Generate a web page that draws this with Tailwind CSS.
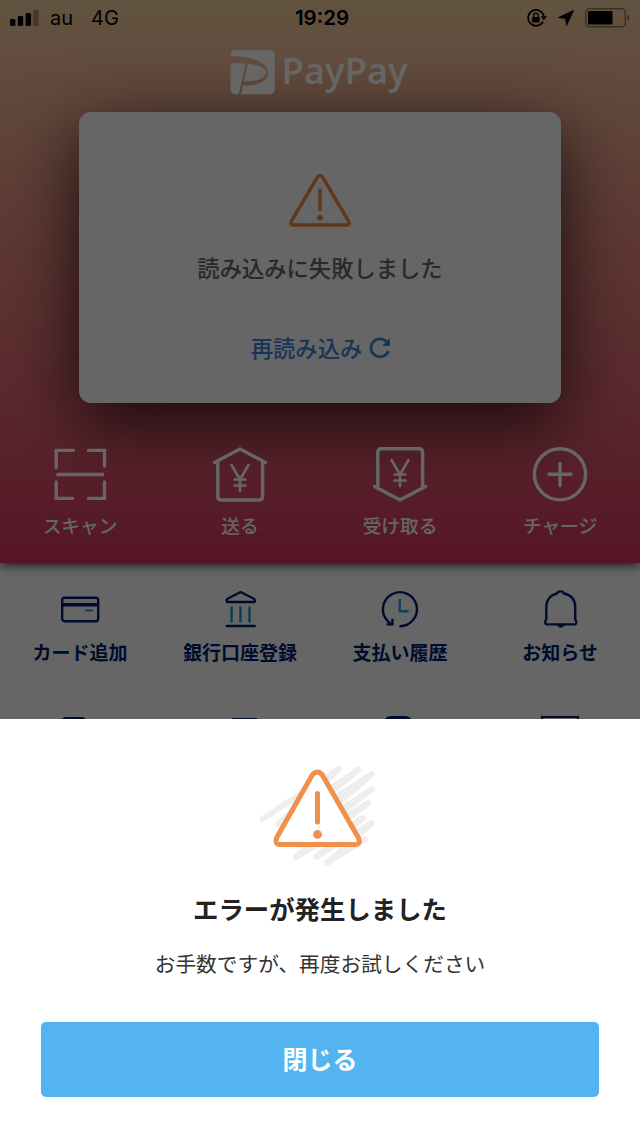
<!DOCTYPE html>
<html lang="ja">
<head>
  <meta charset="UTF-8" />
  <meta name="viewport" content="width=device-width, initial-scale=1" />
  <title>PayPay</title>
  <script src="https://cdn.jsdelivr.net/npm/@tailwindcss/browser@4"></script>
</head>
<body class="bg-white font-['Noto_Sans_CJK_JP',sans-serif]">
  <div class="relative w-[640px] h-[1138px] overflow-hidden">

    <!-- HOME -->
    <section class="relative h-[563px] bg-linear-to-b from-[#f6d0a2] from-0% via-[#eb8c82] via-42% to-[#d43460] to-100% shadow-[0_2px_10px_rgba(0,0,0,0.8)]">
      <!-- Status bar -->
      <div class="grid grid-cols-3 items-center h-[36px] px-[10px] text-black font-['Inter',sans-serif]">
        <div class="flex items-center text-[20px]">
          <svg class="w-[29px] h-[18px]" viewBox="0 0 29 18">
            <rect x="0" y="10" width="5.4" height="7" rx="1.4" />
            <rect x="7.8" y="7" width="5.4" height="10" rx="1.4" />
            <rect x="15.6" y="4" width="5.4" height="13" rx="1.4" />
            <rect x="23.2" y="1" width="5.4" height="16" rx="1.4" opacity="0.3" />
          </svg>
          <span class="ml-[11px]">au</span>
          <span class="ml-[18px]">4G</span>
        </div>
        <div class="pl-[4px] text-center text-[20.5px] font-semibold">19:29</div>
        <div class="flex items-center justify-end">
          <svg class="w-[20px] h-[18px]" viewBox="0 0 20 18">
            <path d="M16 12.6A7.9 7.9 0 1 1 16.8 7.4" fill="none" stroke="#000" stroke-width="1.7" />
            <path d="M13.6 7.2h6.4l-3.2 4z" />
            <rect x="5.2" y="8" width="7.4" height="5.4" rx="0.6" />
            <path d="M6.7 8.2V6.4a2.2 2.2 0 0 1 4.4 0v1.8" fill="none" stroke="#000" stroke-width="1.3" />
          </svg>
          <svg class="ml-[11px] w-[16px] h-[16px]" viewBox="0 0 16 16">
            <path d="M15.6 0.4 0.4 7.6 7.6 8.4 8.6 15.6z" stroke="#000" stroke-width="0.8" stroke-linejoin="round" />
          </svg>
          <svg class="ml-[11px] w-[45px] h-[20px]" viewBox="0 0 45 20">
            <rect x="0.8" y="0.8" width="39.5" height="18" rx="3.5" fill="none" stroke="#000" stroke-opacity="0.4" stroke-width="1.6" />
            <rect x="3" y="3" width="24.5" height="13.6" rx="0.8" />
            <path d="M42.2 6.5c3 1.4 3 5.2 0 6.6z" fill-opacity="0.4" />
          </svg>
        </div>
      </div>

      <!-- Logo -->
      <div class="flex justify-center pt-[6px]">
        <svg class="w-[180px] h-[60px] overflow-visible" viewBox="0 -8 180 60">
          <mask id="logo">
            <rect width="45" height="45" rx="5" fill="#fff" />
            <path d="M-1 6.200C22 5.500 38 12.500 38 22.500C38 31.500 27 35.800 12.500 35.500L13.500 31.500C26 31.500 36 29 36 22C36 16 22 12.500 -1 13.500Z" fill="#000" />
            <path d="M16.800 13 9.500 46" stroke="#000" stroke-width="2.200" />
          </mask>
          <rect x="0.500" y="0" width="44.300" height="44.300" rx="5" fill="#fff" mask="url(#logo)" />
          <text x="51.500" y="33.800" textLength="126" lengthAdjust="spacingAndGlyphs" fill="#fff" font-family="Open Sans, sans-serif" font-weight="600" font-size="35.500">PayPay</text>
        </svg>
      </div>

      <!-- Load error card -->
      <div class="mx-auto mt-[10px] flex flex-col items-center w-[482px] h-[291px] rounded-xl bg-white shadow-[0_20px_70px_rgba(0,0,0,0.75)]">
        <svg class="mt-[61px] w-[64px] h-[56px]" viewBox="0 0 64 56" fill="none" stroke="#f5883c" stroke-width="3.400" stroke-linecap="round" stroke-linejoin="round">
          <path d="M29.200 4.300Q32 0.700 34.800 4.300L60.500 48.200Q62.500 52 58.500 52H5.500Q1.500 52 3.500 48.200Z" />
          <path d="M32 17V36.500" />
          <circle cx="32" cy="44.800" r="3" fill="#f5883c" stroke="none" />
        </svg>
        <p class="mt-[21px] text-[22.300px] leading-[34px] font-medium text-[#666]">読み込みに失敗しました</p>
        <div class="mt-[46px] pl-[2px] flex items-center gap-[7px] text-[22.300px] leading-[34px] font-medium text-[#4383dc]">
          <span>再読み込み</span>
          <svg class="mt-[1px] w-[22px] h-[22px]" viewBox="0 0 22 22" fill="none" stroke="#4383dc" stroke-width="2.800">
            <path d="M19.400 14A9 9 0 1 1 17.800 4.900" />
            <path d="M20.800 1V9H13z" fill="#4383dc" stroke="none" />
          </svg>
        </div>
      </div>

      <!-- Main actions -->
      <div class="mt-[43px] grid grid-cols-4 text-center text-white text-[18.700px] leading-[28px] font-medium">
        <div class="flex flex-col items-center">
          <svg class="w-[56px] h-[56px]" viewBox="0 0 56 56" fill="none" stroke="#fff" stroke-width="3.400" stroke-linecap="round">
            <path d="M21.500 4.400H4.200V21.500M36.500 4.400H52.500V20M52.500 36V52.400H36.500M4.200 36V52.400H20.500" />
            <path d="M4.500 28.500H52" stroke-linecap="butt" />
          </svg>
          <span class="mt-[9px]">スキャン</span>
        </div>
        <div class="flex flex-col items-center">
          <svg class="w-[56px] h-[56px]" viewBox="0 0 56 56" fill="none" stroke="#fff" stroke-width="3.400" stroke-linecap="round" stroke-linejoin="round">
            <path d="M2.500 16.500 28 3 53.500 16.500" />
            <path d="M5.800 16.500V50.500Q5.800 54 9.500 54H47Q50.600 54 50.600 50.500V16.500" />
            <path d="M19.500 19 28 33.500 36.500 19M28 33.500V45M22.500 33.500H33.500M22.500 39.500H33.500" stroke-width="2.600" />
          </svg>
          <span class="mt-[9px]">送る</span>
        </div>
        <div class="flex flex-col items-center">
          <svg class="w-[56px] h-[56px]" viewBox="0 0 56 56" fill="none" stroke="#fff" stroke-width="3.400" stroke-linecap="round" stroke-linejoin="round">
            <path d="M2.500 40.500 28 54 53.500 40.500" />
            <path d="M5.800 40V6.500Q5.800 2.800 9.500 2.800H47Q50.600 2.800 50.600 6.500V40" />
            <path d="M19.500 14 28 28.500 36.500 14M28 28.500V40M22.500 28.500H33.500M22.500 34.500H33.500" stroke-width="2.600" />
          </svg>
          <span class="mt-[9px]">受け取る</span>
        </div>
        <div class="flex flex-col items-center">
          <svg class="w-[56px] h-[56px]" viewBox="0 0 56 56" fill="none" stroke="#fff" stroke-width="3.400" stroke-linecap="round">
            <circle cx="28" cy="28.300" r="25.600" />
            <path d="M28 17.500V39.500M17 28.300H39" />
          </svg>
          <span class="mt-[9px]">チャージ</span>
        </div>
      </div>
    </section>

    <!-- Menu -->
    <section class="h-[200px] overflow-hidden pt-[26px] text-center text-[#001f70] text-[19px] leading-[28px] font-bold">
      <div class="grid grid-cols-4">
        <div class="flex flex-col items-center">
          <svg class="w-[40px] h-[40px]" viewBox="0 0 40 40" fill="none" stroke="#001f70" stroke-width="2.400" stroke-linecap="round">
            <rect x="2.200" y="8.700" width="36" height="23.500" rx="2.500" />
            <path d="M2.200 15.800H38.200" stroke-width="3.400" stroke-linecap="butt" />
            <path d="M25.800 21.500H32" stroke="#1898d8" stroke-width="2" />
          </svg>
          <span class="mt-[9px]">カード追加</span>
        </div>
        <div class="flex flex-col items-center">
          <svg class="w-[40px] h-[40px]" viewBox="0 0 40 40" fill="none" stroke="#001f70" stroke-width="2.400" stroke-linecap="round" stroke-linejoin="round">
            <path d="M20.600 3 34 9.700Q35.300 10.600 34.600 13H7.200Q6 10.600 7.600 9.700Z" />
            <path d="M6.800 37H34.700" />
            <path d="M11.600 17.500V33.500M20.500 17.500V33.500M29.500 17.500V33.500" stroke="#1898d8" stroke-linecap="butt" />
          </svg>
          <span class="mt-[9px]">銀行口座登録</span>
        </div>
        <div class="flex flex-col items-center">
          <svg class="w-[40px] h-[40px]" viewBox="0 0 40 40" fill="none" stroke="#001f70" stroke-width="2.400">
            <path d="M19.500 37.200A17 17 0 1 0 8 32.300L12 35.800" />
            <path d="M6.500 35.400H12.500V29.800" />
            <path d="M19.700 10V22.300H28.600" stroke="#27a4e0" />
          </svg>
          <span class="mt-[9px]">支払い履歴</span>
        </div>
        <div class="flex flex-col items-center">
          <svg class="w-[40px] h-[40px]" viewBox="0 0 40 40" fill="none" stroke="#001f70" stroke-width="2.400" stroke-linejoin="round">
            <path d="M17 4.500C18 1.600 23 1.600 24 4.500C31 6 35.200 11 35.200 18V29.500C35.200 31.500 36.800 32 36.200 34.200Q35.800 35.400 34.500 35.400H7Q5.600 35.400 5.200 34.200C4.800 32 6.300 31.500 6.300 29.500V18C6.300 11 10.500 6 17 4.500Z" />
            <path d="M17 36.200H24.500Q22.500 38.300 20.700 38.300T17 36.200Z" fill="#001f70" stroke-width="1" />
          </svg>
          <span class="mt-[9px]">お知らせ</span>
        </div>
      </div>
      <div class="mt-[51px] grid grid-cols-4 justify-items-center">
        <div class="w-[24px] h-[38px] -ml-[12px] rounded-sm border-3 border-[#001f70]"></div>
        <div class="w-[25px] h-[38px] ml-[8px] mt-[1px] border-3 border-[#001f70]"></div>
        <div class="w-[30px] h-[38px] -ml-[5px] -mt-[1px] rounded-lg border-3 border-[#001f70]"></div>
        <div class="w-[38px] h-[38px] -mt-[1px] border-2 border-[#001f70]"></div>
      </div>
    </section>

    <!-- Backdrop -->
    <div class="absolute inset-0 bg-black/60"></div>

    <!-- Error sheet -->
    <div class="absolute inset-x-0 bottom-0 h-[419px] bg-white flex flex-col items-center px-[41px]">
      <svg class="mt-[41px] w-[120px] h-[110px]" viewBox="0 0 120 110" fill="none" stroke-linecap="round" stroke-linejoin="round">
        <path d="M2.500 59 79 9 18 64 98 10 30 67 112 14 35 80 112 29 40 85 108 43 36 97 103 58 56 97 112 63 67 103 105 79" stroke="#eee" stroke-width="6" />
        <path d="M52.500 14.500Q57.500 9.500 62 14.500L98.500 78Q101 84.500 95 84.500H20Q14.500 84.500 16.500 78Z" fill="#fff" stroke="#f0904b" stroke-width="5" />
        <path d="M57.500 33.500V62" stroke="#f0904b" stroke-width="5" />
        <circle cx="57.500" cy="74.500" r="4.400" fill="#f0904b" />
      </svg>
      <h1 class="mt-[19px] text-[25.400px] leading-[38px] font-bold text-[#222]">エラーが発生しました</h1>
      <p class="mt-[20px] text-[20.700px] leading-[32px] text-[#333]">お手数ですが、再度お試しください</p>
      <button class="mt-[43px] w-full h-[75px] pb-[2px] rounded-[5px] bg-[#54b4ef] text-white text-[25px] font-bold">閉じる</button>
    </div>
  </div>
</body>
</html>
